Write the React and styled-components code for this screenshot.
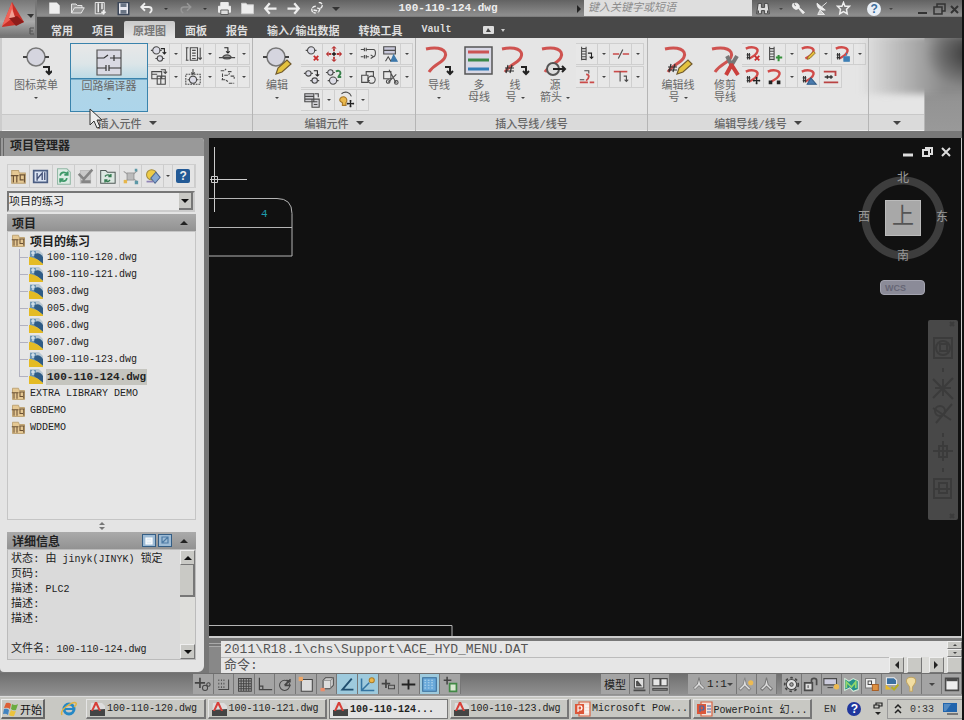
import styled, { createGlobalStyle, css } from "styled-components";
import { useState } from "react";

const GlobalStyle = createGlobalStyle`
  * { box-sizing: border-box; }
  body {
    margin: 0;
    background: #141414;
    font-family: "Liberation Mono", "Noto Sans CJK SC", monospace;
    font-size: 11px;
    color: #333;
  }
  button, input, select { font: inherit; color: inherit; }
  ul { list-style: none; margin: 0; padding: 0; }
`

const Shell = styled.div`
  display: flex;
  flex-direction: column;
  min-height: 100vh;
  border-right: 2px solid #111;
  background: #787878;
`

const PlainButton = styled.button`
  display: flex;
  align-items: center;
  justify-content: center;
  border: 0;
  padding: 0;
  background: none;
  flex: none;
`

const Svg = styled.svg`
  display: block;
  flex: none;
  fill: none;
  stroke: ${({$color}) => $color || "#4a4a4a"};
  stroke-width: ${({$weight}) => $weight || 1.2};
`

const Caret = styled.span`
  width: 0;
  height: 0;
  flex: none;
  border-left: ${({$size = 2}) => $size}px solid transparent;
  border-right: ${({$size = 2}) => $size}px solid transparent;
  ${({$up, $size = 2, $color = "#444"}) => $up
    ? css`border-bottom: ${$size}px solid ${$color};`
    : css`border-top: ${$size}px solid ${$color};`}
`

/* ---------- small drawings, 20 x 20 ---------- */

const Down = ({x, y}) => <path d={`M${x} ${y}h4v6m-2-2 2 2 2-2`} stroke="#222" />
const Part = ({x, y, r = 3}) => <><circle cx={x} cy={y} r={r} fill="#dcdce6" /><path d={`M${x - r - 2} ${y}h2M${x + r} ${y}h2`} /></>
const Wire = () => <path d="M2 4C9 1 16 3 15 7Q14 11 6 15" stroke="#d14b49" strokeWidth="2.6" />
const Cross = ({x, y}) => <path d={`M${x} ${y}l5 5m0-5-5 5`} stroke="#c92b2b" strokeWidth="2" />
const Move = ({x, y}) => <path d={`M${x - 4} ${y}h8M${x} ${y - 4}v8M${x - 1} ${y - 3}h2M${x - 1} ${y + 3}h2M${x - 3} ${y - 1}v2M${x + 3} ${y - 1}v2`} stroke="#222" strokeWidth="1.6" />
const Pencil = ({x, y}) => <path d={`M${x} ${y + 8}l1-3 6-6 2 2-6 6z`} fill="#e5bd3c" stroke="#8b6d26" strokeWidth="1" />
const Ladder = () => <path d="M4 2v15M9 2v15M4 4h5M4 7h5M4 10h5M4 13h5M4 16h5" />
const Tag = () => <path d="M3 11h4M3 14h4M4 9v7M6 9v7" stroke="#333" />

const glyphs = {
  part: <><Part x={7} y={6} r={4} /><Part x={11} y={15} /><Down x={12} y={4} /></>,
  plc: <><path d="M3 3v14M2 3h3M2 17h3M7 3h8v14H7zM9 6h4M9 9h4M9 12h4M9 15h4M18 3v13m-2-2 2 2 2-2" /></>,
  contact: <><path d="M1 14h18M5 14c2-4 8-4 10 0-2 2-8 2-10 0z" fill="#999" /><path d="M7 3h4v6m-2-2 2 2 2-2" stroke="#222" /></>,
  panel: <><path d="M2 4h11v8H2zM2 7h6M12 2h5v4m-2-2 2 2 2-2M8 9h9v9H8zM8 12h9M12 9v9" /></>,
  circuit: <><path d="M2 7h16v11H2z" strokeDasharray="2 1" /><Part x={10} y={13} r={4} /><path d="M10 1v6m-2-2 2 2 2-2" /></>,
  contacts: <path d="M3 3h4l2-2M11 4h5M7 8h4l2-2M14 9h4v3M4 13h4l3 2M12 17h6M5 6v7" strokeDasharray="4 1" />,
  remove: <><Part x={9} y={6} r={4} /><Cross x={12} y={12} /></>,
  redMove: <><path d="M10 1l3 3H7zM10 19l3-3H7zM1 10l3-3v6zM19 10l-3-3v6z" fill="#b93333" stroke="none" /><path d="M10 4v3M10 13v3M4 10h3M13 10h3" stroke="#b93333" strokeWidth="2" /><path d="M8 10h4M10 8v4" stroke="#222" strokeWidth="2" /></>,
  relay: <path d="M2 5h4M6 3v4M8 3v4M8 5h8c3 0 3 8 0 8M2 13h3M6 11v4M8 11v4M8 13h3M16 13l-3-2M16 13l-3 2" />,
  rename: <><path d="M3 2h13v8H3zM3 6h13" fill="#c8c8da" /><path d="M11 18l3-7 4 7z" fill="#3c78ab" stroke="#3c78ab" /><path d="M5 18l3-5 3 5" /></>,
  copyPart: <><Part x={6} y={6} /><Part x={13} y={14} /><Down x={12} y={3} /></>,
  swap: <><Part x={6} y={5} /><Part x={9} y={14} r={4} /><path d="M12 4c5-3 7 2 3 5M14 10h4" stroke="#37804a" strokeWidth="2" /></>,
  box: <><path d="M3 8h7v8H3zM8 8V4h8v6M10 14h2" /><circle cx="14" cy="13" r="4" /></>,
  scissors: <><path d="M3 4h8v8H3zM9 2l8 15M17 7L8 16" /><circle cx="8" cy="15" r="2" /><circle cx="17" cy="16" r="2" /></>,
  pages: <><path d="M2 3h10v9H2zM2 6h10M2 9h10M10 9h8v9h-8zM13 3h4v4" fill="#d1d1d6" /><path d="M12 12h4M12 15h4" /></>,
  lamp: <><path d="M3 10a4 4 0 1 1 7 3v3H6v-3c-2-1-3-2-3-3z" fill="#e9b84c" stroke="#a47528" /><path d="M5 3c4-3 9-2 11 3" /><Move x={15} y={14} /></>,
  ladder: <><Ladder /><Down x={11} y={9} /></>,
  breakWire: <><path d="M1 10h7M12 10h7" stroke="#ca4b49" strokeWidth="1.6" /><path d="M7 15l5-10" /></>,
  tapWire: <><path d="M2 16h9M13 16h5M9 14c4-3 4-7 0-7" stroke="#ca4b49" strokeWidth="2" /><path d="M7 3h5v3M2 13h5" /></>,
  tee: <><path d="M2 4h15" stroke="#ca4b49" strokeWidth="1.8" /><path d="M9 4v11M13 9h3v6m-2-2 2 2 2-2" /></>,
  wireCross: <><Wire /><Tag /><Cross x={12} y={12} /></>,
  ladderPlus: <><Ladder /><path d="M11 14h7M14 11v7" stroke="#35903a" strokeWidth="2.2" /></>,
  wirePencil: <><Wire /><Pencil x={8} y={8} /></>,
  wireBlue: <><Wire /><Tag /><path d="M14 9v3M11 13h6v5h-6z" fill="#3e7fb5" stroke="#3e7fb5" /></>,
  wireMove: <><Wire /><Tag /><Move x={14} y={14} /></>,
  wireDots: <><Wire /><path d="M3 16h4M12 16h4" stroke="#222" strokeWidth="4" /></>,
  wireTri: <><Wire /><Tag /><path d="M8 18l4-7 6 7z" fill="#4a7bad" stroke="#315b86" /></>,
  stretch: <><path d="M2 4h13v5M2 16h16" stroke="#b94343" strokeWidth="2" /><path d="M3 10h9M6 8v4M10 8v4" stroke="#333" strokeWidth="1.6" /></>,
  // quick access
  newFile: <path d="M3 2h10l4 4v11H3z" fill="#eee" stroke="none" />,
  open: <path d="M2 16V4h6l2 2h6v3M2 16l4-7h13l-4 7z" fill="#999" stroke="#eee" />,
  saveAs: <><path d="M3 2h12v15H3z" fill="#777" stroke="#eee" /><path d="M7 3v12M12 3v8M14 12v6M11 15h6" stroke="#eee" strokeWidth="2" /></>,
  save: <><path d="M3 2h14v16H3z" fill="#e8e8ef" stroke="#3b4658" strokeWidth="2" /><path d="M6 3h8v5H6zM6 12h8v5H6z" fill="#697484" stroke="none" /></>,
  undo: <path d="M8 3L3 8l5 5M4 8h9c5 0 5 6 1 8" stroke="#eee" strokeWidth="2.4" />,
  redo: <path d="M12 3l5 5-5 5M16 8H8c-5 0-5 6-1 8" stroke="#979797" strokeWidth="2" />,
  print: <><path d="M5 7V2h10v5M2 7h16v8H2z" fill="#eee" stroke="#eee" /><path d="M5 12h10v6H5z" fill="#ddd" stroke="#555" /></>,
  folder: <path d="M2 17V3h6l2 2h8v12z" fill="#ededed" stroke="#ccc" />,
  left: <path d="M9 3L3 10l6 7M3 10h15" stroke="#eee" strokeWidth="3" />,
  right: <path d="M11 3l6 7-6 7M17 10H2" stroke="#eee" strokeWidth="3" />,
  surf: <path d="M13 2a4 4 0 1 1-2 7M9 7c-7 0-7 9 0 9M6 12l5 1M15 10l-3 6" stroke="#eee" strokeWidth="1.8" strokeDasharray="5 1" />,
  binoculars: <><path d="M4 3h4v5h4V3h4l2 13h-6v-4H8v4H2z" fill="#ddd" stroke="#444" /><path d="M4 12v3M16 12v3" strokeWidth="2" /></>,
  wrench: <path d="M3 3a5 5 0 0 0 7 7l6 7 2-2-7-6a5 5 0 0 0-6-6l2 3-2 2z" fill="#eee" stroke="#eee" />,
  dish: <><path d="M4 3c0 7 5 10 11 9z" fill="#eee" stroke="#eee" /><path d="M10 8l7-6M8 12l-3 6h9z" stroke="#eee" fill="#ccc" /></>,
  star: <path d="M10 2l2 5h6l-4 4 1 6-5-3-5 3 1-6-4-4h6z" stroke="#eee" strokeWidth="2" />,
  // status bar
  infer: <><path d="M1 8h12M7 2v12" strokeWidth="2" /><circle cx="13" cy="14" r="3" /><circle cx="17" cy="10" r="2" /></>,
  snap: <><path d="M4 5h9M4 9h9M4 13h9" strokeDasharray="1 2" strokeWidth="2" /><path d="M16 4v12H4" /></>,
  grid: <path d="M3 3h15v15H3zM6 3v15M9 3v15M12 3v15M15 3v15M3 6h15M3 9h15M3 12h15M3 15h15" />,
  ortho: <path d="M4 2v14h15M4 12h4v4" strokeWidth="1.4" />,
  polar: <><circle cx="9" cy="11" r="6" /><path d="M9 11h7M9 11l7-7M11 5l5 2" strokeWidth="2" /></>,
  osnap: <><path d="M5 4h13v14H5z" fill="#dcdcdc" /><path d="M2 1h5v5H2z" fill="#eda769" stroke="none" /></>,
  osnap3d: <><path d="M6 5l3-3h9v9l-4 4H6z" fill="#ddd" /><path d="M6 5h9v10M15 5l3-3" stroke="#888" /><path d="M3 14h5v4H3z" fill="#eb8e6c" stroke="none" /></>,
  angle: <path d="M15 3L4 16h13" stroke="#214f70" strokeWidth="2.2" />,
  ducs: <><path d="M3 3v14h15M3 17L12 8" stroke="#3474a1" strokeWidth="1.8" /><circle cx="15" cy="5" r="3" fill="#edb547" stroke="#a87c2b" /></>,
  dyn: <><path d="M2 9h10M7 4v10" strokeWidth="2" /><path d="M10 11h7v4h-7z" /></>,
  lwt: <path d="M2 10h8M10 4v12M10 10h8" stroke="#222" strokeWidth="2.2" />,
  tpy: <><path d="M2 2h16v16H2z" fill="#69a9da" stroke="#376b98" /><path d="M4 5h12M4 8h12M4 11h12M4 14h12" stroke="#b4d7ed" strokeDasharray="2 2" /></>,
  props: <><path d="M2 5h9M6 1v9" strokeWidth="1.8" /><path d="M9 9h8v9H9z" fill="#d9e8d1" stroke="#428846" strokeWidth="2" /></>,
  layout: <><path d="M4 3h11v11H4z" fill="#ddd" /><path d="M7 6v5h4L7 6M3 17h14" strokeWidth="2" /></>,
  views: <><path d="M2 4h8v8H2zM11 4h7v8h-7z" fill="#e5e5e5" /><path d="M2 15h16v2H2z" fill="#888" /></>,
  anno: <path d="M10 2l-2 8-5 5 2 2 5-5 5 5 2-2-5-5z" fill="#ddd" stroke="#777" />,
  annoSun: <><path d="M8 2l-2 8-5 5 2 2 5-5 5 5 2-2-5-5z" fill="#ddd" stroke="#888" /><circle cx="15" cy="8" r="3" fill="#edba51" stroke="none" /></>,
  gear: <><circle cx="10" cy="10" r="8" stroke="#444" strokeDasharray="3 3" strokeWidth="2" /><circle cx="10" cy="10" r="6" stroke="#444" fill="#e2e2e2" /><circle cx="10" cy="10" r="2" fill="#aaa" /></>,
  unlock: <><path d="M2 8h9v9H2z" fill="#ddd" strokeWidth="2" /><path d="M10 8V5c0-3 6-3 6 0v6" strokeWidth="2" /><path d="M6 11v3" /></>,
  hardware: <><path d="M1 4h14v7H1z" fill="#ccd" /><path d="M5 14h6" /><circle cx="15" cy="13" r="3" fill="#edba51" stroke="none" /></>,
  vault: <><path d="M2 3l5 3 5-3 6 3v10l-6 2-4-4-6 3z" fill="#25918a" stroke="#d7e8d7" /><path d="M4 14V7l6 6 5-6v7" stroke="#92d76b" strokeWidth="2" /></>,
  lockFile: <><path d="M3 3h12v11H3z" fill="#eee" stroke="#777" /><path d="M6 6h4v4H6z" /><path d="M11 10h7v7h-7z" fill="#de9141" stroke="#a86128" /></>,
  dwgOk: <><path d="M4 2h9l3 3v5H4z" fill="#3b70a1" stroke="#eee" /><path d="M3 10l7 6H3z" fill="#e8ba2a" stroke="none" /><path d="M10 13l3 3 5-6" stroke="#b5ae23" strokeWidth="2.4" /></>,
  bulb: <path d="M8 14c0-3-4-4-4-8 0-6 11-6 11 0 0 4-4 5-4 8v4H8z" fill="#f1dda2" stroke="#c0a562" />,
  clean: <><path d="M2 3h16v15H2z" fill="#eee" strokeWidth="2" /><path d="M3 5h14" strokeWidth="3" /></>,
  // project palette
  project: <><path d="M2 3h8l1 3h7v12H2z" fill="#e5c893" stroke="#bba071" /><path d="M1 9h9M4 9v8M8 9v8M11 8h7M12 8v6h4M17 8v9" stroke="#6b5135" strokeWidth="1.4" /></>,
  newDwg: <><path d="M2 3h16v14H2z" fill="#dbe4f3" stroke="#4c5e83" strokeWidth="2" /><path d="M6 6v9M6 13l6-7v8M15 5v9" stroke="#465378" strokeWidth="1.6" /></>,
  refresh: <><path d="M3 1h11l4 4v14H3z" fill="#ddece5" stroke="#91b7a4" /><path d="M6 9c1-5 7-5 9-1M15 4v4h-4M14 12c-1 5-7 4-8 1M6 17v-4h4" stroke="#3d9868" strokeWidth="2" /></>,
  task: <><path d="M4 3h12v15H4z" fill="#c9c9c9" stroke="#bbb" /><path d="M2 7l6 6 10-11M5 16h11" stroke="#858585" strokeWidth="3" /></>,
  publish: <><path d="M2 3h6l2 2h9v13H2z" fill="#dce7e1" stroke="#505b57" /><path d="M7 10c2-3 6-2 7 0M14 7v3h-3M13 14c-2 3-5 2-6 0M7 17v-3h3" stroke="#357b51" strokeWidth="1.6" /></>,
  nodes: <><path d="M2 4l16 12M18 3L3 17" stroke="#999" /><path d="M6 6h8v8H6z" fill="#bbb" stroke="#999" /><path d="M2 14h4v4H2z" fill="#e6b64b" stroke="none" /><path d="M15 15h4v4h-4zM15 1h3v3h-3z" fill="#5c98a6" stroke="none" /></>,
  plot: <><circle cx="9" cy="8" r="6" fill="#edcb46" stroke="#a38c3e" /><path d="M8 12l6-7 5 6-6 7z" fill="#87a9d2" stroke="#4d6894" /><path d="M3 16h8" stroke="#8f83b5" strokeWidth="2" /></>,
}

const Icon = ({name, size = 18, color, weight}) => (
  <Svg width={size} height={size} viewBox="0 0 20 20" $color={color} $weight={weight} aria-hidden="true">
    {glyphs[name]}
  </Svg>
)

const HelpIcon = styled.span`
  display: flex;
  align-items: center;
  justify-content: center;
  width: 14px;
  height: 14px;
  border-radius: ${({$square}) => $square ? "2px" : "50%"};
  background: ${({$bg}) => $bg};
  color: ${({$fg}) => $fg};
  font: bold 12px "Liberation Sans", sans-serif;
`

/* ---------- title bar and tabs ---------- */

const Header = styled.header`
  display: grid;
  grid-template-columns: 37px 1fr;
  grid-template-rows: 17px 21px;
  background: #484848;
`

const AppButton = styled(PlainButton)`
  grid-row: 1 / 3;
  background: linear-gradient(#777, #aaa 60%, #747474);
  border: 1px solid #777;
  border-width: 0 2px 2px 0;
  overflow: hidden;
`

const TitleBar = styled.div`
  display: flex;
  align-items: center;
  background: linear-gradient(#626262, #8e8e8e 90%, #777);
`

const QuickTools = styled.div`
  display: flex;
  align-items: center;
  width: 292px;
  padding-left: 8px;
  gap: 5px;
`

const QuickButton = styled(PlainButton)`
  height: 14px;
  width: ${({$narrow}) => $narrow ? 11 : 18}px;
  overflow: hidden;
`

const DocTitle = styled.h1`
  flex: 1;
  margin: 0;
  padding-right: 6px;
  text-align: center;
  font-size: 11px;
  line-height: 17px;
  color: #eee;
`

const Search = styled.input`
  width: 168px;
  height: 16px;
  align-self: flex-start;
  border: 0;
  border-radius: 0;
  padding: 0 4px;
  background: #dedede;
  font-style: italic;
  &::placeholder { color: #8c8c8c; opacity: 1; }
`

const InfoTools = styled.div`
  display: flex;
  align-items: center;
  justify-content: space-between;
  width: 142px;
  padding: 0 1px 0 3px;
`

const WindowTools = styled.div`
  display: flex;
  width: 50px;
  margin-left: 18px;
  justify-content: flex-end;
  gap: 1px;
`

const Tabs = styled.nav`
  display: flex;
  align-items: flex-end;
  gap: 1px;
  padding-left: 5px;
`

const Tab = styled(PlainButton)`
  height: 17px;
  padding: 0 9px;
  font-size: ${({$latin}) => $latin ? 10 : 11}px;
  font-weight: bold;
  color: #ddd;
  ${({$active}) => $active && css`
    color: #777;
    background: linear-gradient(#c9c9c9, #e6e6e6);
    border-radius: 2px 2px 0 0;
  `}
`

/* ---------- ribbon ---------- */

const Ribbon = styled.section`
  position: relative;
  display: flex;
  height: 93px;
  overflow: hidden;
  background: linear-gradient(#888, #999);
  border-left: 2px solid #ccc;
`

const RibbonPanel = styled.section`
  display: flex;
  flex-direction: column;
  flex: 0 0 ${({$width}) => $width}px;
  background: #e5e5e5;
  border-right: 1px solid #b5b5b5;
`

const PanelBody = styled.div`
  display: flex;
  flex: 1;
  padding-top: 5px;
`

const PanelTitle = styled(PlainButton)`
  height: 17px;
  gap: 7px;
  background: #dadada;
  border-top: 1px solid #c8c8c8;
  border-bottom: 1px solid #eee;
  color: #666;
  font-weight: 500;
`

const BigButton = styled(PlainButton)`
  flex-direction: column;
  justify-content: flex-start;
  width: ${({$width}) => $width}px;
  height: 69px;
  color: #686868;
  line-height: 12px;
  ${({$hot}) => $hot && css`
    border: 1px solid #3a83ac;
    background: linear-gradient(#e8e8e8 0, #dce5e8 20px, #bddbe6 34px, #3a83ac 34px, #3a83ac 35px, #b0d5e7 36px, #add5ea);
  `}
`

const BigArt = styled.span`
  height: 37px;
  padding-top: 2px;
`

const CaretLine = styled.span`
  display: flex;
  align-items: center;
  gap: 4px;
  min-height: 12px;
`

const ToolGrid = styled.div`
  display: flex;
  flex-direction: column;
`

const ToolRow = styled.div`
  display: flex;
  align-self: flex-start;
  height: 23px;
  padding-bottom: 1px;
`

const ToolButton = styled(PlainButton)`
  width: ${({$menu}) => $menu ? 12 : 22}px;
  height: 22px;
  border: 1px solid #cfcfcf;
  border-width: 1px 1px 1px 0;
  background: #e7e7e7;
`

const Smudge = styled.div`
  position: absolute;
  right: -10px;
  top: -2px;
  width: 112px;
  height: 58px;
  filter: blur(3px);
  background:
    radial-gradient(ellipse 48px 36px at 100% 30%, #333, transparent),
    linear-gradient(to right, transparent, #b4b4b4 40%, #8a8a8a 75%);
`

const Pointer = styled.svg`
  position: absolute;
  left: 86px;
  top: 70px;
`

const curve = "M3 4C16 1 25 5 22 12C20 18 12 18 6 27"
const BigWire = () => <path d={curve} stroke="#cf5350" strokeWidth="3" />
const Hash = ({x, y}) => <path d={`M${x + 3} ${y}l-2 8M${x + 7} ${y}l-2 8M${x} ${y + 3}h9M${x} ${y + 6}h9`} stroke="#333" />
const BigPart = ({x, y}) => <><circle cx={x} cy={y} r="9" fill="#d5d5df" stroke="#777" strokeWidth="1.5" /><path d={`M${x - 13} ${y}h4M${x + 9} ${y}h4`} stroke="#444" strokeWidth="2" /></>
const BigPencil = () => <path d="M15 29l2-6 9-8 4 4-9 8z" fill="#e4c23f" stroke="#725b2d" />

const bigGlyphs = {
  catalog: <><BigPart x={16} y={12} /><path d="M23 22h6v7m-3-3 3 3 3-3" stroke="#222" strokeWidth="2" /></>,
  builder: <><path d="M4 4h24v25H4z" fill="#d9d9e3" stroke="#555" /><path d="M4 12h7l4-3M17 12h11M21 9v6M4 22h9M13 19v6M16 19v6M16 22h12" stroke="#333" /></>,
  edit: <><BigPart x={15} y={12} /><BigPencil /></>,
  wire: <><BigWire /><path d="M22 22h5v7m-3-3 3 3 3-3" stroke="#222" strokeWidth="2" /></>,
  bus: <><path d="M2 2h27v27H2z" fill="#d8d8e5" stroke="#555" strokeWidth="1.5" /><path d="M5 7h21" stroke="#cb5354" strokeWidth="3" /><path d="M5 15h21" stroke="#3b8848" strokeWidth="3" /><path d="M5 24h21" stroke="#317db8" strokeWidth="3" /></>,
  number: <><BigWire /><Hash x={6} y={20} /><path d="M22 22h5v7m-3-3 3 3 3-3" stroke="#222" strokeWidth="2" /></>,
  source: <><BigWire /><circle cx="14" cy="24" r="6" fill="#ddd" stroke="#555" strokeWidth="2" /><path d="M14 24h12m-3-3 3 3-3 3" stroke="#222" strokeWidth="2" /></>,
  editNumber: <><BigWire /><Hash x={6} y={19} /><BigPencil /></>,
  trim: <><BigWire /><path d="M18 11l5 10M28 11l-6 10" stroke="#777" strokeWidth="4" /><path d="M23 19l-6 11M22 19l7 11" stroke="#cb3f3c" strokeWidth="4" /></>,
}

const Big = ({art, width, label, second, menu, hot}) => (
  <BigButton $width={width} $hot={hot}>
    <BigArt>
      <Svg width="32" height="32" viewBox="0 0 32 32" aria-hidden="true">{bigGlyphs[art]}</Svg>
    </BigArt>
    <span>{label}</span>
    <CaretLine>{second}{menu && <Caret />}</CaretLine>
  </BigButton>
)

// a trailing ">" gives the tool its drop-down half
const Tools = ({rows}) => (
  <ToolGrid>
    {rows.map((row) => (
      <ToolRow key={row}>
        {row.split(" ").map((tool) => {
          const name = tool.replace(">", "")
          return [
            <ToolButton key={name} aria-label={name}><Icon name={name} /></ToolButton>,
            tool.endsWith(">") && <ToolButton key={`${name}Menu`} $menu aria-label={`${name} menu`}><Caret /></ToolButton>,
          ]
        })}
      </ToolRow>
    ))}
  </ToolGrid>
)

const Panel = ({width, title, menu, children}) => (
  <RibbonPanel $width={width}>
    <PanelBody>{children}</PanelBody>
    <PanelTitle aria-label={title || "more"}>{title}{menu && <Caret $size={4} />}</PanelTitle>
  </RibbonPanel>
)

/* ---------- project palette ---------- */

const Main = styled.main`
  flex: 1;
  display: grid;
  grid-template-columns: 204px 1fr;
  column-gap: 5px;
  margin-top: 7px;
  background: #777;
`

const Palette = styled.aside`
  display: flex;
  flex-direction: column;
  min-height: 0;
  margin-bottom: 1px;
  background: #e4e4e4;
  border-radius: 0 4px 6px 4px;
`

const PaletteTitle = styled.h2`
  margin: 0;
  height: 18px;
  padding-left: 6px;
  border-left: 4px double #666;
  border-radius: 0 4px 0 0;
  background: #999;
  color: #222;
  font-size: 12px;
  line-height: 18px;
`

const PaletteBody = styled.div`
  display: flex;
  flex-direction: column;
  flex: 1;
  padding: 8px 8px 12px 7px;
`

const PaletteTools = styled.div`
  display: flex;
  height: 24px;
  border: 1px solid #cecece;
`

const PaletteButton = styled(PlainButton)`
  flex: 1 1 ${({$menu}) => $menu ? 8 : 22}px;
  border-right: 1px solid #ccc;
`

const SelectBox = styled.div`
  position: relative;
  height: 21px;
  margin: 3px 1px 2px 0;
  border: 2px solid #777;
  border-right-color: #ccc;
  border-bottom-color: #ccc;
`

const Select = styled.select`
  appearance: none;
  width: 100%;
  height: 17px;
  border: 0;
  border-radius: 0;
  padding: 0;
  background: #eaeaea;
  color: #222;
`

const SelectArrow = styled.span`
  position: absolute;
  right: 0;
  top: 0;
  width: 14px;
  height: 17px;
  display: flex;
  align-items: center;
  justify-content: center;
  background: #c9c9c5;
  border-right: 2px solid #777;
  border-bottom: 2px solid #777;
  pointer-events: none;
`

const SectionTitle = styled.h3`
  display: flex;
  align-items: center;
  gap: 2px;
  height: 17px;
  margin: 0;
  padding: 0 8px 0 5px;
  background: linear-gradient(#aaa, #929292);
  color: #222;
  font-size: 12px;
  & > span:first-child { flex: 1; }
  & > span:last-child { margin-left: 6px; }
`

const Tree = styled.ul`
  flex: 1;
  padding: 0 0 0 3px;
  border: 1px solid #c5c5c5;
  background: #e6e6e6;
`

const TreeRow = styled.div`
  display: flex;
  align-items: center;
  gap: 4px;
  height: 17px;
  font-size: ${({$bold}) => $bold ? 12 : 10}px;
  font-weight: ${({$bold}) => $bold ? "bold" : "normal"};
  color: #222;
`

const Branch = styled.span`
  width: 9px;
  height: ${({$last}) => $last ? 9 : 17}px;
  align-self: flex-start;
  margin: 0 -3px 0 8px;
  border-left: 1px solid #b1b1c1;
  background: linear-gradient(#b1b1c1, #b1b1c1) 0 8px / 9px 1px no-repeat;
`

const FileName = styled.span`
  line-height: 16px;
  ${({$active}) => $active && css`
    margin-left: -1px;
    padding: 0 1px;
    background: #c5c5bf;
    font-size: 11px;
    font-weight: bold;
  `}
`

const Splitter = styled.div`
  display: flex;
  flex-direction: column;
  align-items: center;
  justify-content: center;
  gap: 2px;
  height: 12px;
`

const ViewButton = styled(PlainButton)`
  width: 14px;
  height: 13px;
  border: 1px solid #355e85;
  background: #9dbbd5;
`

const Details = styled.div`
  display: flex;
  height: 111px;
  border: 1px solid #bbb;
  background: #dadada;
`

const DetailList = styled.dl`
  flex: 1;
  margin: 0;
  padding: 2px 0 0 3px;
`

const DetailRow = styled.div`
  display: flex;
  align-items: baseline;
  height: 15px;
  gap: 6px;
  color: #222;
  line-height: 15px;
  white-space: pre;
  & > dd { margin: 0; font-size: 10px; }
  & > dd > span { font-size: 11px; }
`

const ScrollBar = styled.div`
  display: flex;
  flex-direction: column;
  width: 15px;
  background: #dededb;
`

const BevelButton = styled(PlainButton)`
  width: ${({$width = 15}) => $width}px;
  height: ${({$height = 15}) => $height}px;
  background: #c9c9c5;
  border: 1px solid #eee;
  border-right-color: #777;
  border-bottom-color: #777;
`

const ScrollThumb = styled.div`
  flex: 0 0 32px;
  margin-bottom: auto;
  background: #c9c9c5;
  border-right: 2px solid #777;
  border-bottom: 2px solid #777;
`

const DwgIcon = () => (
  <Svg width="14" height="15" viewBox="0 0 14 15" $color="none" aria-hidden="true">
    <path d="M1 0h9l4 4v11H0z" fill="#b9c8d2" />
    <path d="M1 1h6v9H1z" fill="#6e96b5" />
    <path d="M6 4c3-2 6 0 8 3v7L5 7z" fill="#2f5c86" />
    <path d="M0 7c4 0 9 2 14 7v1H0z" fill="#e4bb24" />
    <path d="M4 1v5M2 3h4" stroke="#e9f1f6" />
  </Svg>
)

const files = [
  "100-110-120.dwg", "100-110-121.dwg", "003.dwg", "005.dwg",
  "006.dwg", "007.dwg", "100-110-123.dwg", "100-110-124.dwg",
]

const ProjectPalette = () => (
  <Palette>
    <PaletteTitle>项目管理器</PaletteTitle>
    <PaletteBody>
      <PaletteTools>
        {["project", "newDwg", "refresh", "task", "publish", "nodes", "plot"].map((name) => (
          <PaletteButton key={name} aria-label={name}><Icon name={name} size={17} /></PaletteButton>
        ))}
        <PaletteButton $menu aria-label="plot menu"><Caret /></PaletteButton>
        <PaletteButton aria-label="help"><HelpIcon $square $bg="#235a96" $fg="#eee">?</HelpIcon></PaletteButton>
      </PaletteTools>
      <SelectBox>
        <Select aria-label="项目" defaultValue="项目的练习">
          <option>项目的练习</option>
        </Select>
        <SelectArrow><Caret $size={4} $color="#111" /></SelectArrow>
      </SelectBox>
      <SectionTitle><span>项目</span><Caret $up $size={4} $color="#222" /></SectionTitle>
      <Tree>
        <li>
          <TreeRow $bold><Icon name="project" size={15} />项目的练习</TreeRow>
          <ul>
            {files.map((file, i) => (
              <li key={file}>
                <TreeRow>
                  <Branch $last={i === files.length - 1} />
                  <DwgIcon />
                  <FileName $active={file === "100-110-124.dwg"}>{file}</FileName>
                </TreeRow>
              </li>
            ))}
          </ul>
        </li>
        {["EXTRA LIBRARY DEMO", "GBDEMO", "WDDEMO"].map((name) => (
          <li key={name}>
            <TreeRow><Icon name="project" size={15} />{name}</TreeRow>
          </li>
        ))}
      </Tree>
      <Splitter>
        <Caret $up $size={3} $color="#777" />
        <Caret $size={3} $color="#777" />
      </Splitter>
      <SectionTitle>
        <span>详细信息</span>
        <ViewButton aria-label="details"><Svg width="8" height="8" $color="#fff"><path d="M1 1h6v6H1zM2 4h4" fill="#dfebf5" /></Svg></ViewButton>
        <ViewButton aria-label="preview"><Svg width="9" height="9" $color="#4e7ba5"><path d="M1 1h6v6H1zM1 7l6-6" /></Svg></ViewButton>
        <Caret $up $size={4} $color="#222" />
      </SectionTitle>
      <Details>
        <DetailList>
          <DetailRow><dt>状态:</dt><dd><span>由</span> jinyk(JINYK) <span>锁定</span></dd></DetailRow>
          <DetailRow><dt>页码:</dt></DetailRow>
          <DetailRow><dt>描述:</dt><dd>PLC2</dd></DetailRow>
          <DetailRow><dt>描述:</dt></DetailRow>
          <DetailRow><dt>描述:</dt></DetailRow>
          <DetailRow />
          <DetailRow><dt>文件名:</dt><dd>100-110-124.dwg</dd></DetailRow>
        </DetailList>
        <ScrollBar>
          <BevelButton aria-label="scroll up"><Caret $up $size={4} $color="#111" /></BevelButton>
          <ScrollThumb />
          <BevelButton aria-label="scroll down"><Caret $size={4} $color="#111" /></BevelButton>
        </ScrollBar>
      </Details>
    </PaletteBody>
  </Palette>
)

/* ---------- drawing area ---------- */

const Workspace = styled.div`
  display: flex;
  flex-direction: column;
`

const Canvas = styled.section`
  position: relative;
  flex: 1;
  background: #111;
  border-right: 1px solid #ccc;
  border-bottom: 2px solid #ccc;
`

const Linework = styled.svg`
  position: absolute;
  left: 0;
  ${({$bottom}) => $bottom ? "bottom: 0;" : "top: 0;"}
  fill: none;
  stroke: #b5b5b5;
`

const CanvasTools = styled.div`
  position: absolute;
  top: 8px;
  right: 9px;
  display: flex;
  gap: 7px;
`

const ViewCube = styled.div`
  position: absolute;
  top: 34px;
  right: 12px;
  width: 92px;
  height: 92px;
  display: grid;
  grid-template-columns: 14px 1fr 14px;
  grid-template-rows: 14px 1fr 14px;
  place-items: center;
  color: #999;
  background: radial-gradient(circle, transparent 33px, #3d3d3d 34px, #3d3d3d 41px, transparent 42px);
  & > :nth-child(1) { grid-area: 1 / 2; }
  & > :nth-child(2) { grid-area: 2 / 1; }
  & > :nth-child(3) { grid-area: 2 / 2; }
  & > :nth-child(4) { grid-area: 2 / 3; }
  & > :nth-child(5) { grid-area: 3 / 2; }
`

const Compass = styled.span`
  font-size: 12px;
  line-height: 14px;
`

const CubeFace = styled(PlainButton)`
  width: 36px;
  height: 36px;
  border: 1px solid #bbb;
  background: #a8a8a8;
  color: #555;
  font-size: 22px;
  line-height: 30px;
`

const Wcs = styled(PlainButton)`
  position: absolute;
  top: 142px;
  right: 36px;
  width: 45px;
  height: 15px;
  justify-content: flex-start;
  padding-left: 4px;
  border: 1px solid #a4a4b0;
  border-radius: 4px;
  background: #8b8b98;
  color: #676776;
  font: bold 9px "Liberation Sans", sans-serif;
`

const NavBar = styled.div`
  position: absolute;
  top: 182px;
  right: 3px;
  width: 30px;
  height: 200px;
  background: #484848;
  border-radius: 2px;
`

const Command = styled.section`
  display: grid;
  grid-template-columns: 12px 1fr auto;
  height: 35px;
  padding-top: 3px;
  background: #777;
  font-size: 13px;
  color: #555;
`

const Grip = styled.div`
  grid-row: 1 / 3;
  background: linear-gradient(#777 2px, #aaa 2px, #aaa 3px, #777 3px, #777 5px, #aaa 5px, #aaa 6px, #888 6px);
`

const CommandRow = styled.div`
  display: flex;
  align-items: center;
  height: 16px;
  padding-left: 3px;
  background: #e6e6e6;
  line-height: 15px;
`

const CommandInput = styled.input`
  flex: 1;
  min-width: 0;
  height: 14px;
  border: 0;
  background: transparent;
  outline: none;
`

const InputRow = styled(CommandRow)`
  border-top: 1px solid #bbb;
`

const Spin = styled.div`
  display: flex;
  flex-direction: column;
  align-items: flex-end;
  background: #e6e6e6;
`

const HScroll = styled.div`
  grid-column: 3;
  display: flex;
  justify-content: space-between;
  width: 73px;
  background: #dcdcd9;
`

const Drawing = () => {
  const [command, setCommand] = useState("")

  return (
    <Workspace>
      <Canvas>
        <Linework width="100" height="130">
          <path d="M5.5 9v65M1 41.5h37M2.5 38.5h6v6h-6z" stroke="#ccc" />
          <path d="M0 60.5h68q15 0 15 15v42.500H0M0 89.5h83" />
          <text x="52" y="79" fill="#1e9bad" stroke="none" fontSize="11">4</text>
        </Linework>
        <Linework $bottom width="250" height="12">
          <path d="M0 1.5h243v11" />
        </Linework>
        <CanvasTools>
          <PlainButton aria-label="minimize"><Svg width="12" height="12" $color="#ddd"><path d="M1 9h10" strokeWidth="3" /></Svg></PlainButton>
          <PlainButton aria-label="restore"><Svg width="12" height="12" $color="#ddd"><path d="M2 4h6v6H2zM5 4V2h6v6H8" strokeWidth="2" /></Svg></PlainButton>
          <PlainButton aria-label="close"><Svg width="12" height="12" $color="#ddd"><path d="M2 2l8 8M10 2l-8 8" strokeWidth="2" /></Svg></PlainButton>
        </CanvasTools>
        <ViewCube>
          <Compass>北</Compass>
          <Compass>西</Compass>
          <CubeFace>上</CubeFace>
          <Compass>东</Compass>
          <Compass>南</Compass>
        </ViewCube>
        <Wcs>WCS</Wcs>
        <NavBar>
          <Svg width="30" height="200" $color="#3b3b3b" $weight={2} aria-hidden="true">
            <path d="M22 2l4 4M26 2l-4 4M22 194l4 4M26 194l-4 4" />
            <circle cx="15" cy="28" r="7" />
            <path d="M6 18h18v20H6zM12 24h7v7h-7z" />
            <path d="M15 48v4M5 59l20 20M25 58L5 78M7 68h16M15 59v17M5 88l18 12M24 84L8 103" />
            <circle cx="12" cy="91" r="5" />
            <path d="M15 113v4M5 131h20M15 121v20M11 126h8v11h-8zM15 148v4M6 159h17v19H6zM11 163h8v10h-8zM6 169h17" />
          </Svg>
        </NavBar>
      </Canvas>
      <Command>
        <Grip />
        <CommandRow>2011\R18.1\chs\Support\ACE_HYD_MENU.DAT</CommandRow>
        <Spin>
          <BevelButton $height={8} aria-label="history up"><Caret $up /></BevelButton>
          <BevelButton $height={8} aria-label="history down"><Caret /></BevelButton>
        </Spin>
        <InputRow>
          <label htmlFor="command">命令:</label>
          <CommandInput id="command" value={command} onChange={(e) => setCommand(e.target.value)} />
        </InputRow>
        <HScroll>
          <BevelButton $height={16} aria-label="scroll left"><Svg width="6" height="8" $color="none"><path d="M5 0v8L1 4z" fill="#222" /></Svg></BevelButton>
          <BevelButton $height={16} aria-label="scroll thumb" />
          <span />
          <BevelButton $height={16} aria-label="scroll right"><Svg width="6" height="8" $color="none"><path d="M1 0v8l4-4z" fill="#222" /></Svg></BevelButton>
          <BevelButton $height={16} aria-label="corner" />
        </HScroll>
      </Command>
    </Workspace>
  )
}

/* ---------- status bar and taskbar ---------- */

const StatusBar = styled.footer`
  display: flex;
  height: 23px;
  padding: 1px 0;
  background: linear-gradient(#6e6e6e, #919191);
  border-bottom: 1px solid #999;
`

const Toggles = styled.div`
  display: grid;
  grid-template-columns: repeat(13, 1fr);
  width: 268px;
  margin: 0 auto 0 193px;
`

const StatusButton = styled(PlainButton)`
  min-width: ${({$width = 20}) => $width}px;
  border: 1px solid #777;
  border-width: 0 1px 0 0;
  background: ${({$on}) => $on ? "#9ecadd" : "#a4a4a4"};
  color: #222;
`

const StatusGroup = styled.div`
  display: flex;
  margin-right: ${({$gap = 0}) => $gap}px;
`

const TaskBar = styled.footer`
  display: flex;
  align-items: center;
  height: 24px;
  padding: 2px 0 1px 1px;
  background: #c8c8c3;
  border-top: 1px solid #ddd;
  font-size: 10px;
`

const StartButton = styled(PlainButton)`
  width: 44px;
  height: 20px;
  gap: 1px;
  border: 1px solid #eee;
  border-right: 2px solid #666;
  border-bottom: 2px solid #666;
  color: #111;
  font-size: 11px;
`

const Tasks = styled.div`
  display: flex;
  flex: 1;
  max-width: 726px;
  gap: 2px;
`

const Task = styled(PlainButton)`
  flex: 1 1 0;
  min-width: 0;
  height: 20px;
  justify-content: flex-start;
  padding-left: 2px;
  gap: 1px;
  border: 1px solid #e5e5e5;
  border-right: 2px solid #777;
  border-bottom: 2px solid #777;
  color: #222;
  overflow: hidden;
  white-space: nowrap;
  ${({$active}) => $active && css`
    border: 1px solid #777;
    background: #e3e3e3;
    font-weight: bold;
  `}
`

const Tray = styled.div`
  display: flex;
  align-items: center;
  height: 20px;
  gap: 8px;
  padding: 0 3px 0 6px;
  border: 1px solid #999;
  border-right: 0;
`

const SystemTools = styled.div`
  display: flex;
  align-items: center;
  justify-content: space-between;
  margin-left: auto;
  padding: 0 4px 0 12px;
  width: 75px;
`

const TaskIcon = ({kind}) => (
  <Svg width="17" height="16" viewBox="0 0 17 16" $color="none" aria-hidden="true">
    {kind === "acad" ? (
      <>
        <path d="M2 2h11l3 3v10H1z" fill="#ddd" />
        <path d="M1 9l15-1v7H1z" fill="#444" />
        <path d="M2 10l4-9h2l4 9h-2L7 4 4 10z" fill="#d73f38" />
      </>
    ) : (
      <>
        <path d="M5 1h11v14H5z" fill="#f4e3dc" stroke="#d56343" />
        <path d="M1 3h9v10H1z" fill="#dc5739" />
        <path d="M4 11V5h3q2 2 0 4H4M11 5h4M11 8h4M11 11h4" stroke={kind === "doc" ? "#4568a8" : "#fff"} />
      </>
    )}
  </Svg>
)

const tasks = [
  ["acad", "100-110-120.dwg"],
  ["acad", "100-110-121.dwg"],
  ["acad", "100-110-124..."],
  ["acad", "100-110-123.dwg"],
  ["ppt", "Microsoft Pow..."],
  ["doc", "PowerPoint 幻..."],
]

const toggles = ["infer", "snap", "grid", "ortho", "polar", "osnap", "osnap3d", "angle", "ducs", "dyn", "lwt", "tpy", "props"]
const tabs = ["常用", "项目", "原理图", "面板", "报告", "输入/输出数据", "转换工具", "Vault"]
const quick = ["newFile", "open", "saveAs", "save", "undo", ">", "redo", ">", "print", "folder", "left", "right", "surf", ">"]

const App = () => {
  const [tab, setTab] = useState("原理图")

  return (
    <Shell>
      <GlobalStyle />
      <Header>
        <AppButton aria-label="application menu">
          <Svg width="35" height="36" viewBox="0 0 35 36" $color="none" aria-hidden="true">
            <path d="M12 2l12 20-8 3-14 2z" fill="#c72f28" />
            <path d="M12 2l2 15-12 9z" fill="#ee6257" />
            <path d="M9 18l8-2 7 6-8 4z" fill="#8e1d1a" />
            <path d="M12 9l3 8-6 1z" fill="#f1a094" />
            <path d="M27 14h7l-3 4z" fill="#333" />
            <path d="M30 28h4M30 31h3M30 34h4M30 28v6" stroke="#555" />
          </Svg>
        </AppButton>
        <TitleBar>
          <QuickTools>
            {quick.map((name, i) => name === ">"
              ? <QuickButton key={i} $narrow aria-label="menu"><Caret $size={i === 13 ? 4 : 2} $color="#333" /></QuickButton>
              : <QuickButton key={name} aria-label={name}><Icon name={name} size={15} /></QuickButton>)}
          </QuickTools>
          <DocTitle>100-110-124.dwg</DocTitle>
          <QuickButton $narrow aria-label="expand search"><Svg width="6" height="8" $color="none"><path d="M1 0v8l4-4z" fill="#222" /></Svg></QuickButton>
          <Search aria-label="search" placeholder="键入关键字或短语" />
          <InfoTools>
            <Icon name="binoculars" size={16} /><Caret />
            <Icon name="wrench" size={15} />
            <Icon name="dish" size={15} />
            <Icon name="star" size={15} />
            <span />
            <HelpIcon $bg="#e8eef5" $fg="#3b6d9b">?</HelpIcon><Caret />
          </InfoTools>
          <WindowTools>
            <PlainButton aria-label="minimize"><Svg width="15" height="14" $color="#333"><path d="M2 11h9" strokeWidth="2" /></Svg></PlainButton>
            <PlainButton aria-label="restore"><Svg width="15" height="14" $color="#333"><path d="M2 5h8v7H2zM5 5V2h8v7h-3" strokeWidth="1.5" /></Svg></PlainButton>
            <PlainButton aria-label="close"><Svg width="14" height="14" $color="#333"><path d="M3 4l7 7M10 4l-7 7" strokeWidth="2" /></Svg></PlainButton>
          </WindowTools>
        </TitleBar>
        <Tabs>
          {tabs.map((name) => (
            <Tab key={name} $active={name === tab} $latin={name === "Vault"} onClick={() => setTab(name)}>{name}</Tab>
          ))}
          <Tab aria-label="ribbon display">
            <Svg width="36" height="12" $color="none">
              <path d="M12 3q0-1 1-1h9q1 0 1 1v6q0 1-1 1h-9q-1 0-1-1z" fill="#ddd" />
              <path d="M15 8l2-4 3 4z" fill="#444" />
              <path d="M30 5h4l-2 3z" fill="#ccc" />
            </Svg>
          </Tab>
        </Tabs>
      </Header>

      <Ribbon>
        <Panel width={251} title="插入元件" menu>
          <Big art="catalog" width={68} label="图标菜单" menu />
          <Big art="builder" width={78} label="回路编译器" menu hot />
          <Tools rows={["part> plc> contact>", "panel> circuit> contacts>"]} />
        </Panel>
        <Panel width={163} title="编辑元件" menu>
          <Big art="edit" width={48} label="编辑" menu />
          <Tools rows={["remove redMove> relay rename>", "copyPart swap> box scissors>", "pages> lamp>"]} />
        </Panel>
        <Panel width={232} title="插入导线/线号">
          <Big art="wire" width={46} label="导线" menu />
          <Big art="bus" width={34} label="多" second="母线" />
          <Big art="number" width={38} label="线" second="号" menu />
          <Big art="source" width={42} label="源" second="箭头" menu />
          <Tools rows={["ladder> breakWire>", "tapWire> tee>"]} />
        </Panel>
        <Panel width={221} title="编辑导线/线号" menu>
          <Big art="editNumber" width={60} label="编辑线" second="号" menu />
          <Big art="trim" width={34} label="修剪" second="导线" />
          <Tools rows={["wireCross ladderPlus> wirePencil> wireBlue>", "wireMove wireDots> wireTri stretch"]} />
        </Panel>
        <Panel width={56} menu />
        <Smudge />
        <Pointer width="16" height="22" aria-hidden="true">
          <path d="M2 1v16l4-4 3 7 3-1-3-7h5z" fill="#eee" stroke="#333" />
        </Pointer>
      </Ribbon>

      <Main>
        <ProjectPalette />
        <Drawing />
      </Main>

      <StatusBar>
        <Toggles>
          {toggles.map((name) => (
            <StatusButton key={name} aria-label={name} $on={["angle", "ducs", "tpy"].includes(name)}>
              <Icon name={name} size={17} color="#444" />
            </StatusButton>
          ))}
        </Toggles>
        <StatusGroup $gap={18}>
          <StatusButton $width={29}>模型</StatusButton>
          <StatusButton aria-label="layout"><Icon name="layout" size={17} /></StatusButton>
          <StatusButton aria-label="views"><Icon name="views" size={18} /></StatusButton>
        </StatusGroup>
        <StatusGroup $gap={5}>
          <StatusButton $width={49}><Icon name="anno" size={16} />1:1<Caret $size={3} /></StatusButton>
          <StatusButton aria-label="annotation visibility"><Icon name="annoSun" size={17} /></StatusButton>
          <StatusButton aria-label="annotation scale"><Icon name="anno" size={17} /></StatusButton>
        </StatusGroup>
        <StatusGroup>
          <StatusButton aria-label="workspace"><Icon name="gear" size={17} /></StatusButton>
          <StatusButton aria-label="toolbar lock"><Icon name="unlock" size={17} /></StatusButton>
          <StatusButton aria-label="hardware"><Icon name="hardware" size={18} /></StatusButton>
          {["vault", "lockFile", "dwgOk", "bulb"].map((name) => (
            <StatusButton key={name} aria-label={name}><Icon name={name} size={17} /></StatusButton>
          ))}
          <StatusButton aria-label="status menu"><Caret $size={3} /></StatusButton>
          <StatusButton aria-label="clean screen"><Icon name="clean" size={16} /></StatusButton>
        </StatusGroup>
      </StatusBar>

      <TaskBar>
        <StartButton>
          <Svg width="16" height="16" $color="none" aria-hidden="true">
            <path d="M3 2q3-1 5 1L7 8Q5 6 1 7z" fill="#dc5e36" />
            <path d="M9 3q3 2 6 0l-2 6q-3 1-5-1z" fill="#6bab3f" />
            <path d="M1 8q3-1 5 1l-1 5q-2-2-5-1z" fill="#4283c0" />
            <path d="M8 9q3 2 5 1l-2 5q-2 1-5-1z" fill="#ecc33d" />
          </Svg>
          开始
        </StartButton>
        <PlainButton aria-label="Internet Explorer">
          <Svg width="41" height="16" aria-hidden="true">
            <circle cx="24" cy="8" r="5" stroke="#2588c5" strokeWidth="3" />
            <path d="M20 8h9" stroke="#2588c5" strokeWidth="2" />
            <path d="M17 14q-2-4 5-9t9-3q1 2-2 4" stroke="#e0b342" strokeWidth="1.5" />
          </Svg>
        </PlainButton>
        <Tasks>
          {tasks.map(([kind, title]) => (
            <Task key={title} $active={title === "100-110-124..."}><TaskIcon kind={kind} />{title}</Task>
          ))}
        </Tasks>
        <SystemTools>
          <span>EN</span>
          <HelpIcon $bg="#20379d" $fg="#fff">?</HelpIcon>
          <Svg width="10" height="16" aria-hidden="true"><path d="M1 4h5v3H1zM3 4V2h6v3H6" stroke="#222" /><path d="M2 11h6l-3 3z" fill="#222" stroke="none" /></Svg>
        </SystemTools>
        <Tray>
          <Svg width="8" height="12" aria-hidden="true"><path d="M1 5l3-3 3 3M1 10l3-3 3 3" stroke="#222" strokeWidth="1.5" /></Svg>
          <span>0:33</span>
          <Svg width="17" height="14" $color="none" aria-hidden="true"><path d="M1 1h14v9H1z" fill="#2265ad" /><path d="M2 2h7l-5 7H2z" fill="#528ac2" /><path d="M5 11h11v2H5z" fill="#777" /></Svg>
        </Tray>
      </TaskBar>
    </Shell>
  )
}

export default App
